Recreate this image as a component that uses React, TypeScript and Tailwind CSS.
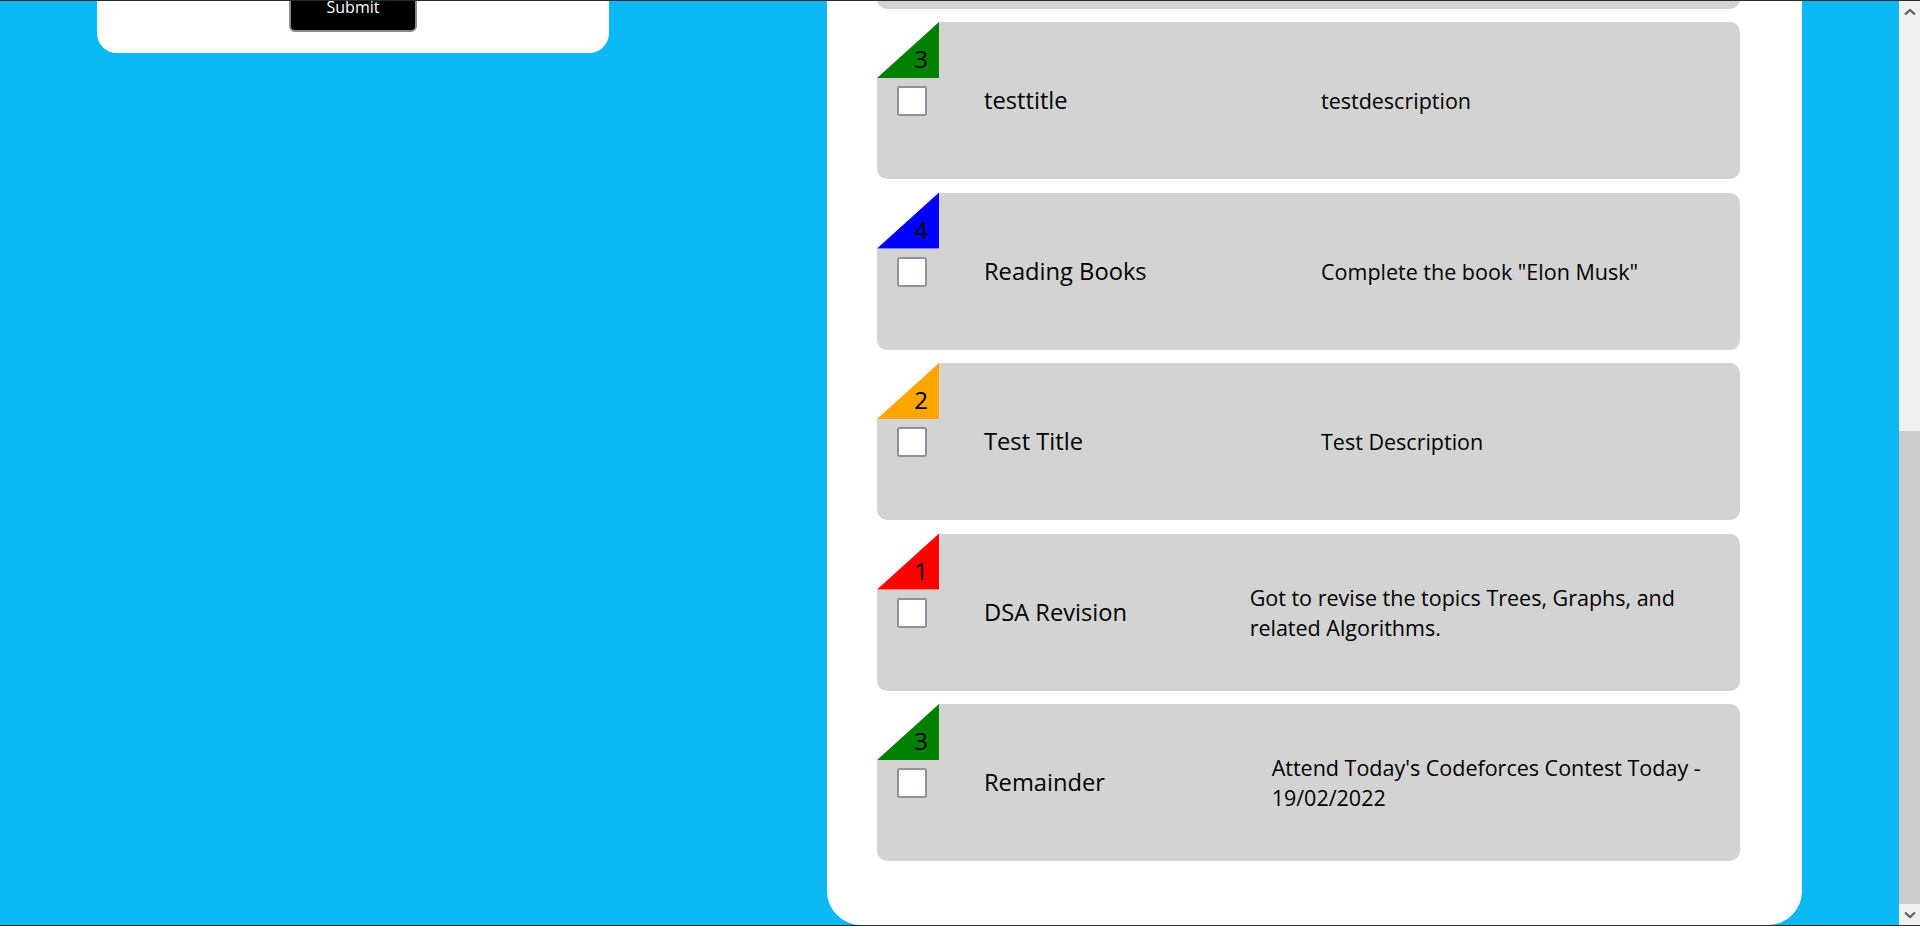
import React from 'react';

type Todo = { priority: number; title: string; desc: string };

const todos: Todo[] = [
  { priority: 2, title: 'Workout', desc: 'Go for a morning run' },
  { priority: 3, title: 'testtitle', desc: 'testdescription' },
  { priority: 4, title: 'Reading Books', desc: 'Complete the book "Elon Musk"' },
  { priority: 2, title: 'Test Title', desc: 'Test Description' },
  { priority: 1, title: 'DSA Revision', desc: 'Got to revise the topics Trees, Graphs, and related Algorithms.' },
  { priority: 3, title: 'Remainder', desc: "Attend Today's Codeforces Contest Today - 19/02/2022" },
];

const priorityColors: Record<number, string> = {
  1: 'bg-[#ff0000]',
  2: 'bg-[#ffa500]',
  3: 'bg-[#008000]',
  4: 'bg-[#0000ff]',
};

function TodoCard({ todo }: { todo: Todo }) {
  return (
    <div className="flex flex-col h-[157px] shrink-0">
      <div className="flex h-[56px]">
        <div
          className={`w-[62px] ${priorityColors[todo.priority]} [clip-path:polygon(100%_0,100%_100%,0_100%)] flex items-end justify-end pr-[11px] pb-[7px] text-[24px] leading-[24px] text-black`}
        >
          {todo.priority}
        </div>
        <div className="flex-1 bg-[#d3d3d3] rounded-tr-[10px]" />
      </div>
      <div className="flex-1 bg-[#d3d3d3] rounded-b-[10px]">
        <div className="flex items-center h-[46px] pl-[20px]">
          <input
            type="checkbox"
            className="appearance-none shrink-0 w-[30px] h-[30px] bg-white border-2 border-[#8f8f9d] rounded-[3px]"
          />
          <div className="ml-[57px] w-[337px] text-[23.7px] text-black">{todo.title}</div>
          <div className="text-[21.5px] leading-[30px] text-black">{todo.desc}</div>
        </div>
      </div>
    </div>
  );
}

function Chevron({ down }: { down?: boolean }) {
  return (
    <svg width="12" height="8" viewBox="0 0 12 8">
      <polyline
        points={down ? '1,1.5 6,6 11,1.5' : '1,6.5 6,2 11,6.5'}
        fill="none"
        stroke="#606060"
        strokeWidth="2.2"
      />
    </svg>
  );
}

export default function App() {
  return (
    <div className="h-[926px] w-[1920px] overflow-hidden flex border-y border-[#2b2b2b] bg-[#0cb9f4] font-['Open_Sans',sans-serif]">
      <div className="flex-1 flex items-start">
        <div className="ml-[97px] w-[512px] h-[52px] bg-white rounded-b-[20px] flex justify-center items-start">
          <button className="w-[128px] h-[51px] -mt-[20px] bg-black text-white text-[16px] border-2 border-[#8a8a8a] rounded-[6px]">
            Submit
          </button>
        </div>
        <div className="ml-[218px] w-[975px] self-stretch bg-white rounded-b-[34px] overflow-hidden flex flex-col justify-end gap-[13.5px] pl-[50px] pr-[62px] pb-[64px]">
          {todos.map((todo, i) => (
            <TodoCard key={i} todo={todo} />
          ))}
        </div>
      </div>
      <div className="w-[21px] flex flex-col bg-[#f0f0f0]">
        <div className="h-[21px] flex items-center justify-center">
          <Chevron />
        </div>
        <div className="flex-1 flex flex-col justify-end">
          <div className="h-[473px] bg-[#cdcdcd]" />
        </div>
        <div className="h-[21px] flex items-center justify-center">
          <Chevron down />
        </div>
      </div>
    </div>
  );
}
